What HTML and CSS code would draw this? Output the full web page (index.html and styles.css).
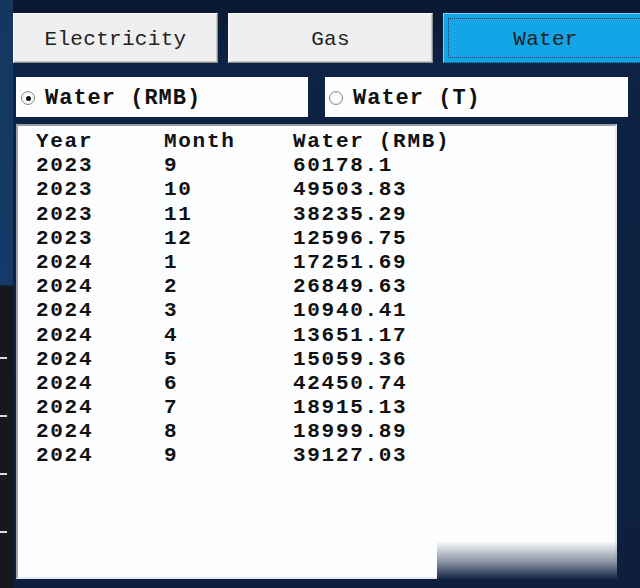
FILE: index.html
```html
<!DOCTYPE html>
<html lang="en">
<head>
  <meta charset="UTF-8" />
  <title>Utility Records</title>
  <link rel="stylesheet" href="styles.css">
</head>
<body>
  <div class="side-strip">
    <span class="tick"></span>
    <span class="tick"></span>
    <span class="tick"></span>
    <span class="tick"></span>
  </div>

  <div class="panel">
    <nav class="tabs">
      <button class="tab">Electricity</button>
      <button class="tab">Gas</button>
      <button class="tab active"><span>Water</span></button>
    </nav>

    <div class="options">
      <label class="option">
        <span class="radio checked"></span>
        Water (RMB)
      </label>
      <label class="option">
        <span class="radio"></span>
        Water (T)
      </label>
    </div>

    <div class="listbox">
      <div class="row head"><span>Year</span><span>Month</span><span>Water (RMB)</span></div>
      <div class="row"><span>2023</span><span>9</span><span>60178.1</span></div>
      <div class="row"><span>2023</span><span>10</span><span>49503.83</span></div>
      <div class="row"><span>2023</span><span>11</span><span>38235.29</span></div>
      <div class="row"><span>2023</span><span>12</span><span>12596.75</span></div>
      <div class="row"><span>2024</span><span>1</span><span>17251.69</span></div>
      <div class="row"><span>2024</span><span>2</span><span>26849.63</span></div>
      <div class="row"><span>2024</span><span>3</span><span>10940.41</span></div>
      <div class="row"><span>2024</span><span>4</span><span>13651.17</span></div>
      <div class="row"><span>2024</span><span>5</span><span>15059.36</span></div>
      <div class="row"><span>2024</span><span>6</span><span>42450.74</span></div>
      <div class="row"><span>2024</span><span>7</span><span>18915.13</span></div>
      <div class="row"><span>2024</span><span>8</span><span>18999.89</span></div>
      <div class="row"><span>2024</span><span>9</span><span>39127.03</span></div>
      <div class="fade"></div>
    </div>
  </div>
</body>
</html>
```

FILE: styles.css
```css
* { box-sizing: border-box; margin: 0; padding: 0; }
html, body { height: 100%; }
body {
  background: linear-gradient(#0a1830, #0e2244 60px, #0d1f3d);
  display: flex;
  overflow: hidden;
  font-family: "Liberation Mono", "DejaVu Sans Mono", monospace;
  color: #111;
}
.side-strip {
  width: 13px;
  flex-shrink: 0;
  background: linear-gradient(#14375f 0, #163a68 285px, #15181e 286px);
  display: flex;
  flex-direction: column;
  padding-top: 357px;
  gap: 56px;
}
.tick {
  display: block;
  width: 7px;
  height: 2px;
  background: #d8dce4;
}
.panel {
  flex: 1;
  padding-top: 13px;
}
.tabs {
  display: flex;
  gap: 10px;
  margin-right: -10px;
}
.tab {
  width: 205px;
  height: 50px;
  flex-shrink: 0;
  padding-top: 3px;
  background: #efefef;
  border: 1px solid;
  border-color: #fdfdfd #8e8e8e #8e8e8e #fdfdfd;
  box-shadow: inset -1px -1px 0 #c8c8c8;
  font-family: "Liberation Mono", monospace;
  font-size: 21px;
  letter-spacing: 0.3px;
  color: #222;
}
.tab.active {
  background: #14a5e6;
  border-color: #7fd0f5 #0d6fa0 #0d6fa0 #7fd0f5;
  padding: 4px;
  box-shadow: none;
}
.tab.active span {
  display: flex;
  align-items: center;
  justify-content: center;
  height: 100%;
  padding-top: 3px;
  border: 1px dotted #1b3b66;
}
.options {
  display: flex;
  gap: 17px;
  margin: 14px 0 0 3px;
  width: 612px;
}
.option {
  flex: 1;
  height: 40px;
  background: #fdfdfd;
  display: flex;
  align-items: center;
  gap: 10px;
  padding: 2px 0 0 4px;
  font-size: 22px;
  letter-spacing: 1px;
  font-weight: bold;
}
.option:first-child { flex: 0 0 292px; padding-left: 5px; }
.radio {
  width: 14px;
  height: 14px;
  border-radius: 50%;
  border: 1px solid #8a8a8a;
  background: radial-gradient(circle, #fff 40%, #e0e0e0);
  display: flex;
  align-items: center;
  justify-content: center;
}
.radio.checked::after {
  content: "";
  width: 5px;
  height: 5px;
  border-radius: 50%;
  background: #111;
}
.listbox {
  position: relative;
  margin: 7px 0 0 3px;
  width: 601px;
  height: 455px;
  background: #fcfdff;
  border: 2px solid;
  border-color: #9a9ea6 #e6e8ec #e6e8ec #9a9ea6;
  padding: 4px 0 0 18px;
  font-size: 21px;
  letter-spacing: 1.7px;
  font-weight: bold;
}
.row {
  display: grid;
  grid-template-columns: 128px 129px 1fr;
  height: 24.2px;
  line-height: 24.2px;
  white-space: pre;
}
.fade {
  position: absolute;
  right: -2px;
  bottom: -2px;
  width: 180px;
  height: 38px;
  background: linear-gradient(to bottom, rgba(252,253,255,0), #8b93a3 55%, #142746);
}
```
